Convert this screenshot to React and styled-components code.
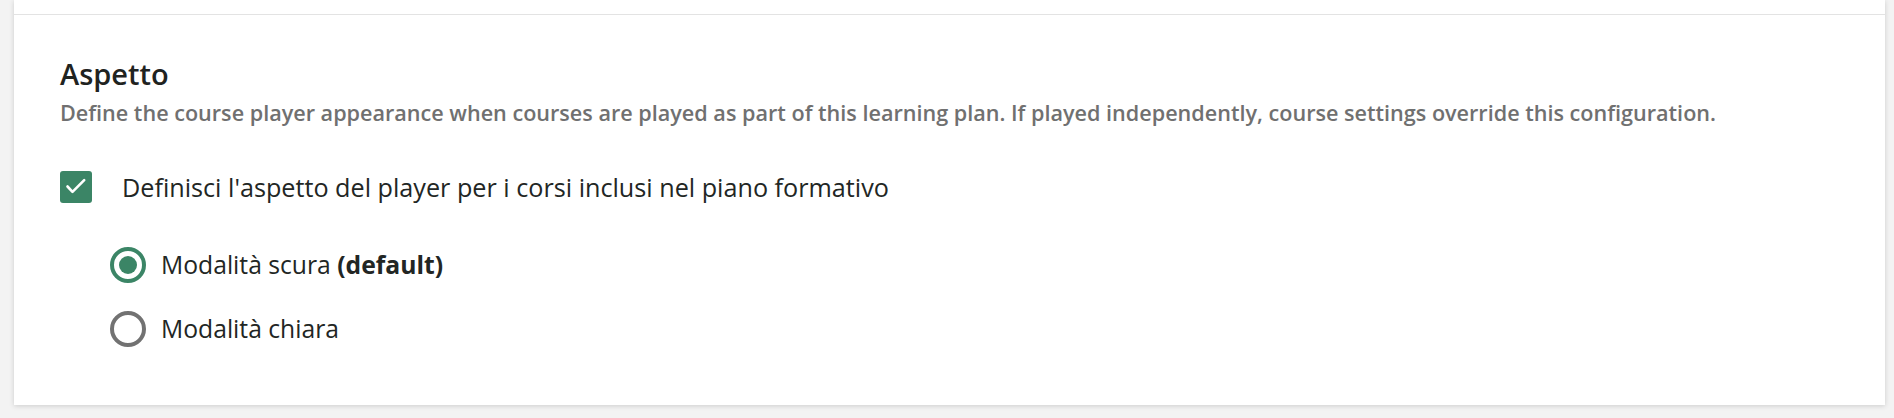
import React, { useState } from "react";
import styled, { createGlobalStyle } from "styled-components";

const Global = createGlobalStyle`
  html, body { margin: 0; padding: 0; }
  body {
    background: #f3f3f3;
    font-family: "Open Sans", "Noto Sans", sans-serif;
    -webkit-font-smoothing: antialiased;
  }
`;

const Page = styled.div`
  padding: 0 9px 12px 14px;
`;

const Card = styled.div`
  background: #ffffff;
  box-shadow: 0 1px 5px rgba(0, 0, 0, 0.16);
`;

const PrevSection = styled.div`
  height: 14px;
  border-bottom: 1px solid #e3e3e3;
`;

const Section = styled.section`
  padding: 41px 46px 58px 46px;
`;

const Title = styled.h2`
  margin: 0;
  font-size: 29px;
  line-height: 36px;
  font-weight: 600;
  color: #1f2321;
`;

const Description = styled.p`
  margin: 7px 0 0;
  font-size: 21.6px;
  line-height: 28px;
  font-weight: 600;
  color: #707070;
`;

const CheckRow = styled.label`
  display: flex;
  align-items: center;
  gap: 30px;
  margin-top: 44px;
  cursor: pointer;
`;

const CheckBox = styled.span`
  width: 32px;
  height: 32px;
  border-radius: 3px;
  background: ${(p) => (p.$checked ? "#3b8566" : "#fff")};
  border: ${(p) => (p.$checked ? "none" : "3px solid #707070")};
  box-sizing: border-box;
  display: flex;
  align-items: center;
  justify-content: center;
  flex: none;
`;

const Label = styled.span`
  font-size: ${(p) => p.$size || 24}px;
  line-height: 32px;
  color: #222624;
  strong { font-weight: 700; }
`;

const RadioGroup = styled.div`
  display: flex;
  flex-direction: column;
  gap: 28px;
  margin-top: 44px;
  padding-left: 50px;
`;

const RadioRow = styled.label`
  display: flex;
  align-items: center;
  gap: 15px;
  cursor: pointer;
`;

const RadioCircle = styled.span`
  width: 36px;
  height: 36px;
  box-sizing: border-box;
  border-radius: 50%;
  border: 4px solid ${(p) => (p.$checked ? "#3b8566" : "#727272")};
  display: flex;
  align-items: center;
  justify-content: center;
  flex: none;
  &::after {
    content: "";
    width: 18px;
    height: 18px;
    border-radius: 50%;
    background: #3b8566;
    display: ${(p) => (p.$checked ? "block" : "none")};
  }
`;

const RadioLabel = styled(Label)`
  line-height: 36px;
`;

const CheckIcon = () => (
  <svg width="32" height="32" viewBox="0 0 32 32" fill="none">
    <path d="M7.5 15.5 L12.5 20.8 L24.2 9.2" stroke="#fff" strokeWidth="2.6" strokeLinecap="round" strokeLinejoin="round" />
  </svg>
);

export default function App() {
  const [checked, setChecked] = useState(true);
  const [mode, setMode] = useState("dark");
  return (
    <>
      <Global />
      <Page>
        <Card>
          <PrevSection />
          <Section>
            <Title>Aspetto</Title>
            <Description>
              Define the course player appearance when courses are played as part of this learning plan. If played independently, course settings override this configuration.
            </Description>
            <CheckRow onClick={() => setChecked(!checked)}>
              <CheckBox $checked={checked}>{checked && <CheckIcon />}</CheckBox>
              <Label $size={25.2}>Definisci l'aspetto del player per i corsi inclusi nel piano formativo</Label>
            </CheckRow>
            <RadioGroup>
              <RadioRow onClick={() => setMode("dark")}>
                <RadioCircle $checked={mode === "dark"} />
                <RadioLabel $size={24.7}>
                  Modalità scura <strong>(default)</strong>
                </RadioLabel>
              </RadioRow>
              <RadioRow onClick={() => setMode("light")}>
                <RadioCircle $checked={mode === "light"} />
                <RadioLabel $size={24.7}>Modalità chiara</RadioLabel>
              </RadioRow>
            </RadioGroup>
          </Section>
        </Card>
      </Page>
    </>
  );
}
